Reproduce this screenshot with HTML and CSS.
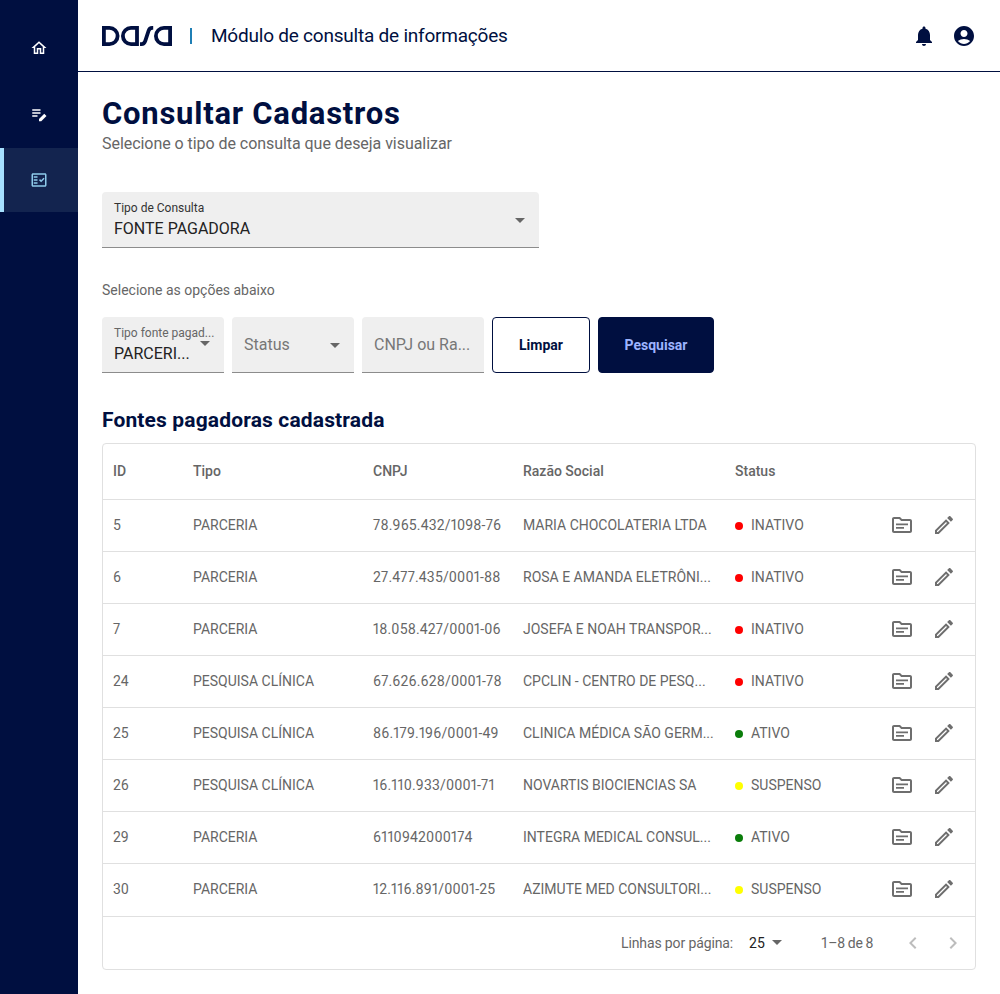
FILE: index.html
```html
<!DOCTYPE html>
<html lang="pt-BR">
<head>
<meta charset="UTF-8">
<meta name="viewport" content="width=device-width, initial-scale=1.0">
<title>Consultar Cadastros</title>
<link rel="stylesheet" href="styles.css">
</head>
<body>
  <svg class="defs" width="0" height="0">
    <symbol id="i-folder" viewBox="0 0 24 24"><path d="M20 6h-8l-2-2H4c-1.1 0-2 .9-2 2v12c0 1.1.9 2 2 2h16c1.1 0 2-.9 2-2V8c0-1.1-.9-2-2-2zm0 12H4V6h5.17l2 2H20v10z"/><path d="M6 10.500h12v1.800H6zM6 14h8v1.800H6z"/></symbol>
    <symbol id="i-edit" viewBox="0 0 24 24"><path d="M3 17.25V21h3.75L17.81 9.94l-3.75-3.75L3 17.25zM5.92 19H5v-.92l9.06-9.06.92.92L5.92 19zM20.71 7.04c.39-.39.39-1.02 0-1.41l-2.34-2.34c-.39-.39-1.02-.39-1.41 0l-1.83 1.83 3.75 3.75 1.83-1.83z"/></symbol>
    <symbol id="i-chev" viewBox="0 0 24 24"><path d="M15.41 7.41 14 6l-6 6 6 6 1.41-1.41L10.83 12z"/></symbol>
  </svg>

  <nav class="sidebar">
    <a class="side-item side-home"><svg viewBox="0 0 24 24"><path d="M12 5.69l5 4.5V18h-2v-6H9v6H7v-7.81l5-4.5M12 3L2 12h3v8h6v-6h2v6h6v-8h3L12 3z"/></svg></a>
    <a class="side-item"><svg viewBox="0 0 24 24"><path d="M3 3h11v2H3zM3 7h11v2H3zM3 11h7v2H3zM12 16v3h3l7-7-3-3z"/></svg></a>
    <a class="side-item active"><svg viewBox="0 0 24 24"><path d="M20 3H4c-1.1 0-2 .9-2 2v14c0 1.1.9 2 2 2h16c1.1 0 2-.9 2-2V5c0-1.1-.9-2-2-2zm0 16H4V5h16v14z"/><path d="M19.41 10.42 17.99 9l-3.17 3.17-1.41-1.42L12 12.17 14.82 15zM5 7h5v2H5zm0 4h5v2H5zm0 4h5v2H5z"/></svg></a>
  </nav>

  <div class="main">
    <header class="topbar">
      <svg class="logo" viewBox="0 0 70 20" width="70" height="20">
        <path d="M1.900 1.900H7.500a8.100 8.100 0 0 1 0 16.200H1.900z"/>
        <path d="M35 1.900H29a8.100 8.100 0 0 0 0 16.200h6z"/>
        <path d="M38 18.100h1.500c2 0 3-1 3.700-3L46.500 5c.7-2.300 1.700-3.100 3.700-3.100h1"/>
        <path d="M68.100 1.900H62a8.100 8.100 0 0 0 0 16.200h6.100z"/>
      </svg>
      <span class="topbar-sep"></span>
      <span class="topbar-title">Módulo de consulta de informações</span>
      <div class="topbar-icons">
        <svg viewBox="0 0 24 24"><path d="M12 22c1.100 0 2-.9 2-2h-4c0 1.100.89 2 2 2zm6-6v-5c0-3.070-1.640-5.640-4.500-6.320V4c0-.83-.67-1.500-1.500-1.500s-1.500.67-1.500 1.500v.68C7.630 5.360 6 7.920 6 11v5l-2 2v1h16v-1l-2-2z"/></svg>
        <svg viewBox="0 0 24 24"><path d="M12 2C6.480 2 2 6.480 2 12s4.480 10 10 10 10-4.480 10-10S17.520 2 12 2zm0 4c1.930 0 3.500 1.570 3.500 3.500S13.930 13 12 13s-3.500-1.570-3.500-3.500S10.070 6 12 6zm0 14c-2.030 0-4.430-.82-6.140-2.880C7.550 15.800 9.680 15 12 15s4.450.8 6.140 2.120C16.430 19.180 14.030 20 12 20z"/></svg>
      </div>
    </header>

    <main class="content">
      <h1>Consultar Cadastros</h1>
      <p class="subtitle">Selecione o tipo de consulta que deseja visualizar</p>

      <div class="field field-main">
        <div class="field-text">
          <span class="field-label">Tipo de Consulta</span>
          <span class="field-value">FONTE PAGADORA</span>
        </div>
        <span class="arrow"></span>
      </div>

      <p class="options-label">Selecione as opções abaixo</p>

      <div class="filters">
        <div class="field field-small">
          <div class="field-text">
            <span class="field-label">Tipo fonte pagad...</span>
            <span class="field-value">PARCERI...</span>
          </div>
          <span class="arrow arrow-up"></span>
        </div>
        <div class="field field-small">
          <span class="field-placeholder">Status</span>
          <span class="arrow"></span>
        </div>
        <div class="field field-small">
          <span class="field-placeholder">CNPJ ou Ra...</span>
        </div>
        <button class="btn btn-clear">Limpar</button>
        <button class="btn btn-search">Pesquisar</button>
      </div>

      <h2>Fontes pagadoras cadastrada</h2>

      <div class="table-box">
        <table>
          <thead>
            <tr><th class="c-id">ID</th><th class="c-tipo">Tipo</th><th class="c-cnpj">CNPJ</th><th class="c-razao">Razão Social</th><th class="c-status">Status</th><th class="c-acoes"></th></tr>
          </thead>
          <tbody>
            <tr><td>5</td><td>PARCERIA</td><td>78.965.432/1098-76</td><td>MARIA CHOCOLATERIA LTDA</td><td><span class="dot red"></span>INATIVO</td><td class="acoes"><svg><use href="#i-folder"/></svg><svg><use href="#i-edit"/></svg></td></tr>
            <tr><td>6</td><td>PARCERIA</td><td>27.477.435/0001-88</td><td>ROSA E AMANDA ELETRÔNI...</td><td><span class="dot red"></span>INATIVO</td><td class="acoes"><svg><use href="#i-folder"/></svg><svg><use href="#i-edit"/></svg></td></tr>
            <tr><td>7</td><td>PARCERIA</td><td>18.058.427/0001-06</td><td>JOSEFA E NOAH TRANSPOR...</td><td><span class="dot red"></span>INATIVO</td><td class="acoes"><svg><use href="#i-folder"/></svg><svg><use href="#i-edit"/></svg></td></tr>
            <tr><td>24</td><td>PESQUISA CLÍNICA</td><td>67.626.628/0001-78</td><td>CPCLIN - CENTRO DE PESQ...</td><td><span class="dot red"></span>INATIVO</td><td class="acoes"><svg><use href="#i-folder"/></svg><svg><use href="#i-edit"/></svg></td></tr>
            <tr><td>25</td><td>PESQUISA CLÍNICA</td><td>86.179.196/0001-49</td><td>CLINICA MÉDICA SÃO GERM...</td><td><span class="dot green"></span>ATIVO</td><td class="acoes"><svg><use href="#i-folder"/></svg><svg><use href="#i-edit"/></svg></td></tr>
            <tr><td>26</td><td>PESQUISA CLÍNICA</td><td>16.110.933/0001-71</td><td>NOVARTIS BIOCIENCIAS SA</td><td><span class="dot yellow"></span>SUSPENSO</td><td class="acoes"><svg><use href="#i-folder"/></svg><svg><use href="#i-edit"/></svg></td></tr>
            <tr><td>29</td><td>PARCERIA</td><td>6110942000174</td><td>INTEGRA MEDICAL CONSUL...</td><td><span class="dot green"></span>ATIVO</td><td class="acoes"><svg><use href="#i-folder"/></svg><svg><use href="#i-edit"/></svg></td></tr>
            <tr class="row-last"><td>30</td><td>PARCERIA</td><td>12.116.891/0001-25</td><td>AZIMUTE MED CONSULTORI...</td><td><span class="dot yellow"></span>SUSPENSO</td><td class="acoes"><svg><use href="#i-folder"/></svg><svg><use href="#i-edit"/></svg></td></tr>
          </tbody>
        </table>
        <div class="pager">
          <span class="pager-label">Linhas por página:</span>
          <span class="pager-size">25</span>
          <span class="arrow pager-arrow"></span>
          <span class="pager-count">1–8 de 8</span>
          <svg class="chev"><use href="#i-chev"/></svg>
          <svg class="chev chev-next"><use href="#i-chev"/></svg>
        </div>
      </div>
    </main>
  </div>
</body>
</html>
```

FILE: styles.css
```css
* {
  box-sizing: border-box;
}

body {
  font-family: Roboto, "Liberation Sans", sans-serif;
  margin: 0;
  height: 994px;
  display: flex;
  color: #666;
  background-color: #fff;
  overflow: hidden;
}

.defs {
  display: none;
}

.sidebar {
  width: 78px;
  flex-shrink: 0;
  background-color: #000f40;
  padding-top: 16px;
  display: flex;
  flex-direction: column;
}

.side-item {
  height: 64px;
  display: flex;
  justify-content: center;
  align-items: center;
  fill: #fff;
}

.side-home {
  margin-bottom: 4px;
}

.side-item svg {
  width: 18px;
  height: 18px;
}

.side-item.active {
  background-color: #13244f;
  border-left: 4px solid #a6e0ff;
  padding-right: 4px;
  fill: #8fcbec;
}

.main {
  flex: 1;
  min-width: 0;
}

.topbar {
  height: 72px;
  border-bottom: 1px solid #000f40;
  padding: 0 24px;
  display: flex;
  align-items: center;
}

.logo {
  fill: none;
  stroke: #000f40;
  stroke-width: 3.8;
}

.topbar-sep {
  width: 2px;
  height: 16px;
  background-color: #1f7fb5;
  margin: 0 19px 0 18px;
}

.topbar-title {
  font-size: 19px;
  letter-spacing: -0.22px;
  color: #000f40;
}

.topbar-icons {
  margin-left: auto;
  display: flex;
  gap: 16px;
  fill: #000f40;
}

.topbar-icons svg {
  width: 24px;
  height: 24px;
  display: block;
}

.content {
  padding: 24px 24px 0;
}

h1 {
  font-size: 31px;
  line-height: 36px;
  font-weight: 700;
  letter-spacing: 0.75px;
  color: #000f40;
  margin: 0;
}

.subtitle {
  font-size: 16px;
  line-height: 24px;
  letter-spacing: -0.05px;
  margin: 0 0 36px;
}

.field {
  background-color: #efefef;
  border-bottom: 1px solid #8c8c8c;
  border-radius: 4px 4px 0 0;
  display: flex;
  align-items: center;
  justify-content: space-between;
  padding: 0 12px;
}

.field-main {
  width: 437px;
  height: 56px;
}

.field-text {
  display: flex;
  flex-direction: column;
  min-width: 0;
  padding-top: 1px;
}

.field-label {
  font-size: 12px;
  line-height: 16px;
  color: #333;
}

.field-value {
  font-size: 16px;
  line-height: 24px;
  margin-top: 1px;
  color: #222;
}

.field-placeholder {
  font-size: 16px;
  color: #777;
  white-space: nowrap;
}

.arrow {
  width: 0;
  height: 0;
  flex-shrink: 0;
  border-left: 5.5px solid transparent;
  border-right: 5.5px solid transparent;
  border-top: 5px solid #666;
  margin-top: 2px;
  margin-right: 2px;
}

.arrow-up {
  margin-top: 0;
  margin-bottom: 2px;
  margin-left: -8px;
}

.options-label {
  font-size: 14px;
  line-height: 20px;
  margin: 32px 0 17px;
}

.filters {
  display: flex;
  gap: 8px;
}

.field-small {
  width: 122px;
  height: 56px;
}

.field-small .field-label {
  color: #666;
  white-space: nowrap;
}

.btn {
  height: 56px;
  border-radius: 4px;
  font-family: inherit;
  font-size: 14px;
  font-weight: 700;
  border: 1px solid #000f40;
}

.btn-clear {
  width: 98px;
  background-color: #fff;
  color: #000f40;
}

.btn-search {
  width: 116px;
  background-color: #000f40;
  color: #9db4ff;
}

h2 {
  font-size: 21px;
  line-height: 28px;
  font-weight: 700;
  letter-spacing: 0.14px;
  color: #000f40;
  margin: 33px 0 9px;
}

.table-box {
  border: 1px solid #e0e0e0;
  border-radius: 4px;
  width: 874px;
}

table {
  width: 100%;
  table-layout: fixed;
  border-collapse: collapse;
  font-size: 14px;
  font-variant-numeric: proportional-nums;
}

th {
  height: 55px;
  text-align: left;
  font-weight: 500;
  padding: 0 10px;
  border-bottom: 1px solid #e0e0e0;
}

td {
  height: 52px;
  padding: 0 10px;
  border-bottom: 1px solid #e0e0e0;
  white-space: nowrap;
}

td:nth-child(3) {
  letter-spacing: 0.15px;
}

.row-last td {
  height: 53px;
  padding-bottom: 1px;
}

.c-id { width: 80px; }
.c-tipo { width: 180px; }
.c-cnpj { width: 150px; }
.c-razao { width: 212px; }
.c-status { width: 130px; }

.dot {
  display: inline-block;
  width: 8px;
  height: 8px;
  border-radius: 50%;
  margin-right: 8px;
}

.red { background-color: #f00; }
.green { background-color: #0a7d0a; }
.yellow { background-color: #ff0; }

td.acoes {
  padding: 0 19px 1px 0;
  text-align: right;
  line-height: 0;
  fill: #6e6e6e;
}

.acoes svg {
  width: 24px;
  height: 24px;
  margin-left: 18px;
}

.pager {
  height: 52px;
  display: flex;
  align-items: center;
  font-size: 14px;
  padding-left: 518px;
}

.pager-label {
  letter-spacing: -0.12px;
}

.pager-size {
  color: #222;
  margin-left: 16px;
}

.pager-arrow {
  margin: 0 0 0 7px;
}

.pager-count {
  margin-left: 39px;
  letter-spacing: -0.35px;
}

.chev {
  width: 24px;
  height: 24px;
  fill: #bdbdbd;
  margin-left: 28px;
}

.chev-next {
  transform: scaleX(-1);
  margin-left: 16px;
}
```
